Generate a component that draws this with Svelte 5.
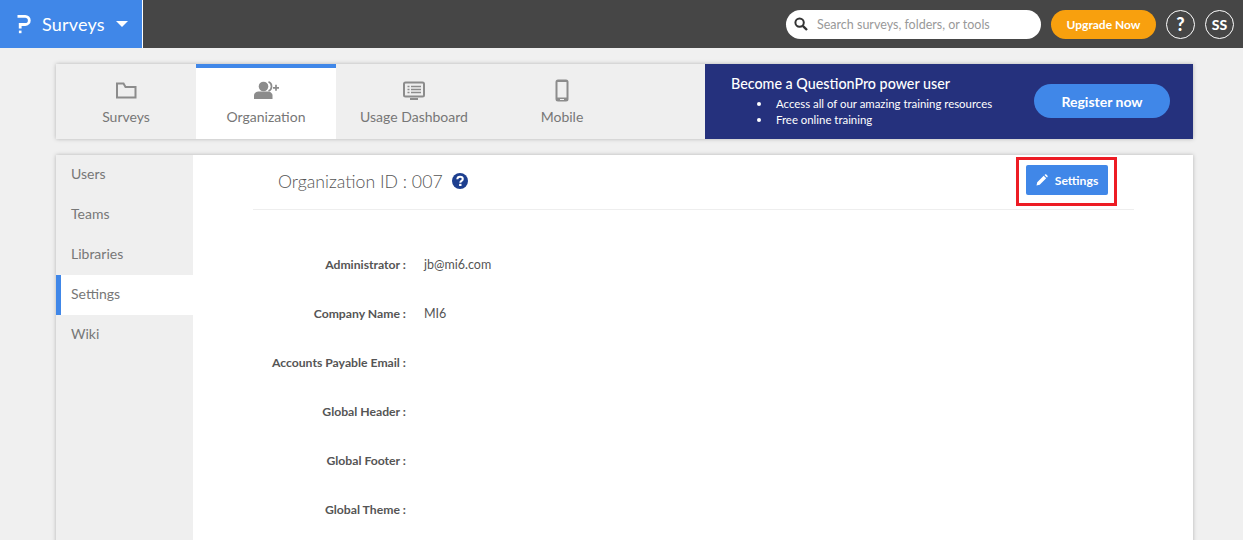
<script>
  const tabs = [
    { label: 'Surveys', icon: 'folder', cls: '' },
    { label: 'Organization', icon: 'org', cls: 'active' },
    { label: 'Usage Dashboard', icon: 'usage', cls: 'wide' },
    { label: 'Mobile', icon: 'mobile', cls: '' }
  ];
  const side = ['Users', 'Teams', 'Libraries', 'Settings', 'Wiki'];
  const rows = [
    ['Administrator :', 'jb@mi6.com'],
    ['Company Name :', 'MI6'],
    ['Accounts Payable Email :', ''],
    ['Global Header :', ''],
    ['Global Footer :', ''],
    ['Global Theme :', '']
  ];
</script>

<div class="page">
  <header class="top">
    <div class="brand">
      <svg class="logo" width="14" height="20" viewBox="0 0 14 20">
        <path d="M0.500 2.300H8.200a3.900 3.900 0 0 1 0 8.200H3.200V14.500" fill="none" stroke="#fff" stroke-width="2.800"/>
        <rect x="1.900" y="16.600" width="2.600" height="2.600" fill="#fff"/>
      </svg>
      <span class="brand-name">Surveys</span>
      <span class="caret"></span>
    </div>
    <div class="top-right">
      <div class="search">
        <svg width="14" height="14" viewBox="0 0 14 14">
          <circle cx="5.600" cy="5.600" r="4.200" fill="none" stroke="#333" stroke-width="2"/>
          <path d="M8.800 8.800L13 13" stroke="#333" stroke-width="2.400"/>
        </svg>
        <span>Search surveys, folders, or tools</span>
      </div>
      <div class="upgrade">Upgrade Now</div>
      <div class="circle q">?</div>
      <div class="circle">SS</div>
    </div>
  </header>

  <main class="content">
    <section class="tabbar">
      {#each tabs as t}
        <div class="tab {t.cls}">
          <svg width="26" height="24" viewBox="0 0 26 24">
            {#if t.icon === 'folder'}
              <path d="M4 4.500V18.500h18.500V8H12.500L10.500 4.500H4z" fill="none" stroke="#8c8c8c" stroke-width="2"/>
            {:else if t.icon === 'org'}
              <circle cx="10.500" cy="7.500" r="4.800" fill="#8c8c8c"/>
              <path d="M1 20v-3.500c0-2.500 2.500-4 5-4h8.500c2.500 0 5 1.500 5 4V20z" fill="#8c8c8c"/>
              <path d="M15.500 2.800a5 5 0 0 1 0 9.200M20 8.800h6M23 5.800v6" fill="none" stroke="#8c8c8c" stroke-width="1.700"/>
            {:else if t.icon === 'usage'}
              <rect x="3" y="3.500" width="20" height="14" rx="1.500" fill="none" stroke="#8c8c8c" stroke-width="2"/>
              <path d="M6.500 7.500h2M10 7.500h10M6.500 10.500h2M10 10.500h10M6.500 13.500h2M10 13.500h10" stroke="#8c8c8c" stroke-width="1.400"/>
              <path d="M9 19h8v2H9z" fill="#8c8c8c"/>
            {:else}
              <rect x="6.500" y="0.500" width="13" height="22" rx="2.500" fill="#8c8c8c"/>
              <rect x="8.500" y="3" width="9" height="15.500" fill="#efefef"/>
              <rect x="11" y="20" width="4" height="1" fill="#efefef"/>
            {/if}
          </svg>
          <span>{t.label}</span>
        </div>
      {/each}
      <div class="promo">
        <div class="promo-text">
          <h2>Become a QuestionPro power user</h2>
          <ul>
            <li>Access all of our amazing training resources</li>
            <li>Free online training</li>
          </ul>
        </div>
        <div class="register">Register now</div>
      </div>
    </section>

    <section class="panel">
      <nav class="side">
        {#each side as s}
          <div class="side-item" class:on={s === 'Settings'}>{s}</div>
        {/each}
      </nav>
      <div class="body">
        <div class="head">
          <div class="title">
            <span>Organization ID : 007</span>
            <svg width="16" height="16" viewBox="0 0 16 16">
              <circle cx="8" cy="8" r="8" fill="#1d3f8f"/>
              <path d="M5.300 6.200C5.400 4.500 6.600 3.700 8 3.700c1.600 0 2.800.9 2.800 2.300 0 1.900-2.500 1.900-2.500 3.700" fill="none" stroke="#fff" stroke-width="2"/>
              <rect x="7.100" y="10.800" width="2.400" height="2.200" fill="#fff"/>
            </svg>
          </div>
          <div class="btn-wrap">
            <div class="btn">
              <svg width="12" height="12" viewBox="0 0 12 12">
                <path d="M0.500 11.500l.7-3.200L7.700 1.800l2.500 2.500-6.500 6.500zM8.500 1l.6-.5c.4-.3.900-.3 1.200 0l1.200 1.200c.3.300.3.800 0 1.200l-.5.600z" fill="#fff"/>
              </svg>
              Settings
            </div>
          </div>
        </div>
        <dl class="rows">
          {#each rows as r}
            <div class="row">
              <dt>{r[0]}</dt>
              <dd>{r[1]}</dd>
            </div>
          {/each}
        </dl>
      </div>
    </section>
  </main>
</div>

<style>
  :global(html), :global(body) {
    margin: 0;
    height: 540px;
    overflow: hidden;
    background: #f0f0f0;
  }
  .page {
    font-family: "Lato", "Noto Sans", sans-serif;
    height: 540px;
    overflow: hidden;
    color: #555;
  }
  .top {
    height: 48px;
    background: #464646;
    display: flex;
    justify-content: space-between;
    align-items: center;
  }
  .brand {
    height: 48px;
    background: #4087e8;
    border-right: 1px solid #fff;
    display: flex;
    align-items: center;
    padding-left: 17px;
    width: 125px;
    color: #fff;
  }
  .logo { margin-right: 11px; }
  .brand-name { font-size: 18px; letter-spacing: 0.2px; }
  .caret {
    margin-left: 11px;
    border-left: 6.500px solid transparent;
    border-right: 6.500px solid transparent;
    border-top: 6.500px solid #fff;
  }
  .top-right {
    display: flex;
    align-items: center;
    padding-right: 9px;
  }
  .search {
    width: 255px;
    height: 29px;
    box-sizing: border-box;
    background: #fff;
    border-radius: 15px;
    padding-left: 8px;
    display: flex;
    align-items: center;
    gap: 9px;
    font-size: 12.500px;
    color: #999;
  }
  .upgrade {
    margin-left: 10px;
    width: 105px;
    height: 29px;
    background: #f8a00e;
    border-radius: 15px;
    color: #fff;
    font-size: 12px;
    font-weight: 700;
    display: flex;
    align-items: center;
    justify-content: center;
  }
  .circle {
    margin-left: 10px;
    width: 29px;
    height: 29px;
    box-sizing: border-box;
    border: 1px solid #fff;
    border-radius: 50%;
    color: #fff;
    font-size: 14px;
    font-weight: 900;
    display: flex;
    align-items: center;
    justify-content: center;
  }
  .circle.q { font-size: 18px; }
  .content {
    width: 1137px;
    margin-left: 56px;
    padding-top: 16px;
  }
  .tabbar {
    height: 75px;
    display: flex;
    background: #efefef;
    box-shadow: 0 0 4px rgba(0, 0, 0, 0.25);
  }
  .tab {
    width: 140px;
    box-sizing: border-box;
    padding-top: 15px;
    display: flex;
    flex-direction: column;
    align-items: center;
    gap: 5px;
    font-size: 14px;
    color: #777;
  }
  .tab.wide { width: 156px; }
  .tab.active {
    background: #fff;
    border-top: 4px solid #4087e8;
    padding-top: 11px;
  }
  .promo {
    margin-left: auto;
    width: 488px;
    background: #25317d;
    color: #fff;
    display: flex;
    align-items: center;
    justify-content: space-between;
    padding: 0 23px 0 26px;
    box-sizing: border-box;
  }
  .promo-text { padding-bottom: 2px; }
  .promo h2 {
    margin: 0 0 2px;
    font-size: 14.300px;
    font-weight: 500;
    line-height: 20px;
  }
  .promo ul {
    margin: 0;
    padding: 0 0 0 26px;
    list-style: none;
    font-size: 11.400px;
    line-height: 16px;
  }
  .promo li::before {
    content: '';
    display: inline-block;
    width: 4px;
    height: 4px;
    border-radius: 50%;
    background: #fff;
    margin-right: 15px;
    vertical-align: 2px;
  }
  .register {
    width: 136px;
    height: 34px;
    margin-bottom: 1px;
    background: #4087e8;
    border-radius: 17px;
    display: flex;
    align-items: center;
    justify-content: center;
    font-size: 14px;
    font-weight: 700;
  }
  .panel {
    margin-top: 16px;
    height: 400px;
    background: #fff;
    display: flex;
    box-shadow: 0 0 4px rgba(0, 0, 0, 0.25);
  }
  .side {
    width: 137px;
    background: #efefef;
    flex: none;
  }
  .side-item {
    height: 40px;
    line-height: 38px;
    padding-left: 15px;
    font-size: 14px;
    color: #777;
  }
  .side-item.on {
    background: #fff;
    padding-left: 10px;
    border-left: 5px solid #4087e8;
  }
  .body {
    flex: 1;
    padding: 0 59px 0 60px;
  }
  .head {
    height: 54px;
    border-bottom: 1px solid #eee;
    display: flex;
    justify-content: space-between;
    padding: 0 26px 0 25px;
  }
  .title {
    display: flex;
    align-items: center;
    gap: 9px;
    font-size: 17.700px;
    font-weight: 300;
    height: 52px;
    color: #555;
  }
  .btn-wrap {
    margin: 2px -9px 0 0;
    border: 3px solid #ed1c24;
    height: 30px;
    padding: 5px 6px 8px 7px;
  }
  .btn {
    width: 82px;
    height: 30px;
    background: #4087e8;
    border-radius: 2px;
    color: #fff;
    font-size: 12.200px;
    font-weight: 700;
    display: flex;
    align-items: center;
    justify-content: center;
    gap: 7px;
  }
  .rows {
    margin: 30px 0 0;
  }
  .row {
    height: 49px;
    display: flex;
    align-items: center;
    font-size: 12.200px;
  }
  .row dt {
    width: 153px;
    text-align: right;
    font-weight: 700;
  }
  .row dd {
    margin: 0 0 0 18px;
    font-size: 12.500px;
  }
</style>
